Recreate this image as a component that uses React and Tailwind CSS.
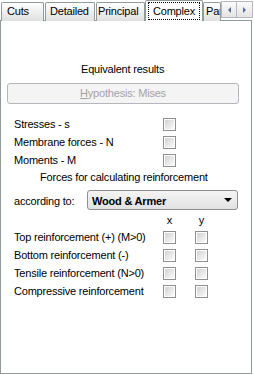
function Check() {
  return (
    <span className="block w-[13px] h-[13px] border border-[#8e8f8f] bg-white p-px">
      <span className="block w-full h-full bg-gradient-to-br from-[#d2d2d2] to-[#fbfbfb]" />
    </span>
  );
}

function Tab({ className, children }) {
  return (
    <div className={`h-[19px] shrink-0 overflow-hidden whitespace-nowrap border border-b-0 border-[#919b9c] rounded-t-[2px] bg-gradient-to-b from-white to-[#e0e0e0] leading-[17px] ${className}`}>
      {children}
    </div>
  );
}

function Row({ label, checks = 1 }) {
  return (
    <div className="flex h-[18px] items-center">
      <span className="w-[149px]">{label}</span>
      <Check />
      {checks > 1 && (
        <span className="ml-[19px]">
          <Check />
        </span>
      )}
    </div>
  );
}

export default function App() {
  return (
    <div className="w-[254px] h-[375px] bg-white text-black font-['Liberation_Sans',Arial,sans-serif] text-[11px] tracking-[-0.2px] overflow-hidden">
      {/* tab strip */}
      <div className="flex h-[21px] items-end pl-px">
        <Tab className="w-[43px] pl-[5px]">Cuts</Tab>
        <Tab className="ml-px w-[50px] pl-[4px]">Detailed</Tab>
        <Tab className="ml-px w-[49px] pl-[1px]">Principal</Tab>
        <div className="relative z-10 h-[21px] w-[58px] shrink-0 border border-b-0 border-[#919b9c] rounded-t-[2px] bg-white">
          <div className="ml-[2px] mt-px h-[18px] w-[52px] border border-dotted border-black pl-[4px] leading-[16px]">
            Complex
          </div>
        </div>
        <Tab className="w-[18px] pl-[2px]">Par</Tab>
        <div className="self-start mt-px flex">
          <button className="flex h-[17px] w-[16px] items-center justify-center border border-[#b5b8c0] bg-gradient-to-b from-[#fbfbfb] to-[#e4e4e4]">
            <span className="block h-0 w-0 border-y-[3px] border-r-[3px] border-y-transparent border-r-[#5a6e94]" />
          </button>
          <button className="flex h-[17px] w-[16px] items-center justify-center border border-l-0 border-[#b5b8c0] bg-gradient-to-b from-[#fbfbfb] to-[#e4e4e4]">
            <span className="block h-0 w-0 border-y-[3px] border-l-[3px] border-y-transparent border-l-[#5a6e94]" />
          </button>
        </div>
      </div>

      {/* panel */}
      <div className="-mt-px h-[354px] w-[252px] border border-[#919b9c] bg-white">
        <div className="mt-[41px] h-[14px] pl-[80px] leading-[14px]">Equivalent results</div>

        <div className="ml-[6px] mt-[7px] flex h-[21px] w-[232px] items-center justify-center rounded-[3px] border border-[#b3b6ba] bg-[#f4f4f4] text-[#a3a3a3]">
          <span>
            <span className="underline">H</span>ypothesis: Mises
          </span>
        </div>

        <div className="mt-[11px] pl-[13px]">
          <Row label="Stresses - s" />
          <Row label="Membrane forces - N" />
          <Row label="Moments - M" />
        </div>

        <div className="h-[17px] pl-[39px] leading-[17px]">Forces for calculating reinforcement</div>

        <div className="mt-[4px] flex h-[20px] items-center pl-[13px]">
          <span className="w-[73px] pt-[2px]">according to:</span>
          <div className="flex h-[20px] w-[151px] items-center justify-between rounded-[3px] border border-[#8c8f94] bg-gradient-to-b from-[#f4f4f4] to-[#e2e2e2] pl-[4px] pr-[5px]">
            <span className="pt-[2px] font-bold">Wood &amp; Armer</span>
            <span className="block h-0 w-0 border-x-[4px] border-t-[4px] border-x-transparent border-t-black" />
          </div>
        </div>

        <div className="mt-[3px] flex h-[15px] items-center pl-[162px] leading-[15px]">
          <span className="w-[13px] text-center">x</span>
          <span className="ml-[19px] w-[13px] text-center">y</span>
        </div>

        <div className="pl-[13px]">
          <Row label="Top reinforcement (+) (M>0)" checks={2} />
          <Row label="Bottom reinforcement (-)" checks={2} />
          <Row label="Tensile reinforcement (N>0)" checks={2} />
          <Row label="Compressive reinforcement" checks={2} />
        </div>
      </div>
    </div>
  );
}
